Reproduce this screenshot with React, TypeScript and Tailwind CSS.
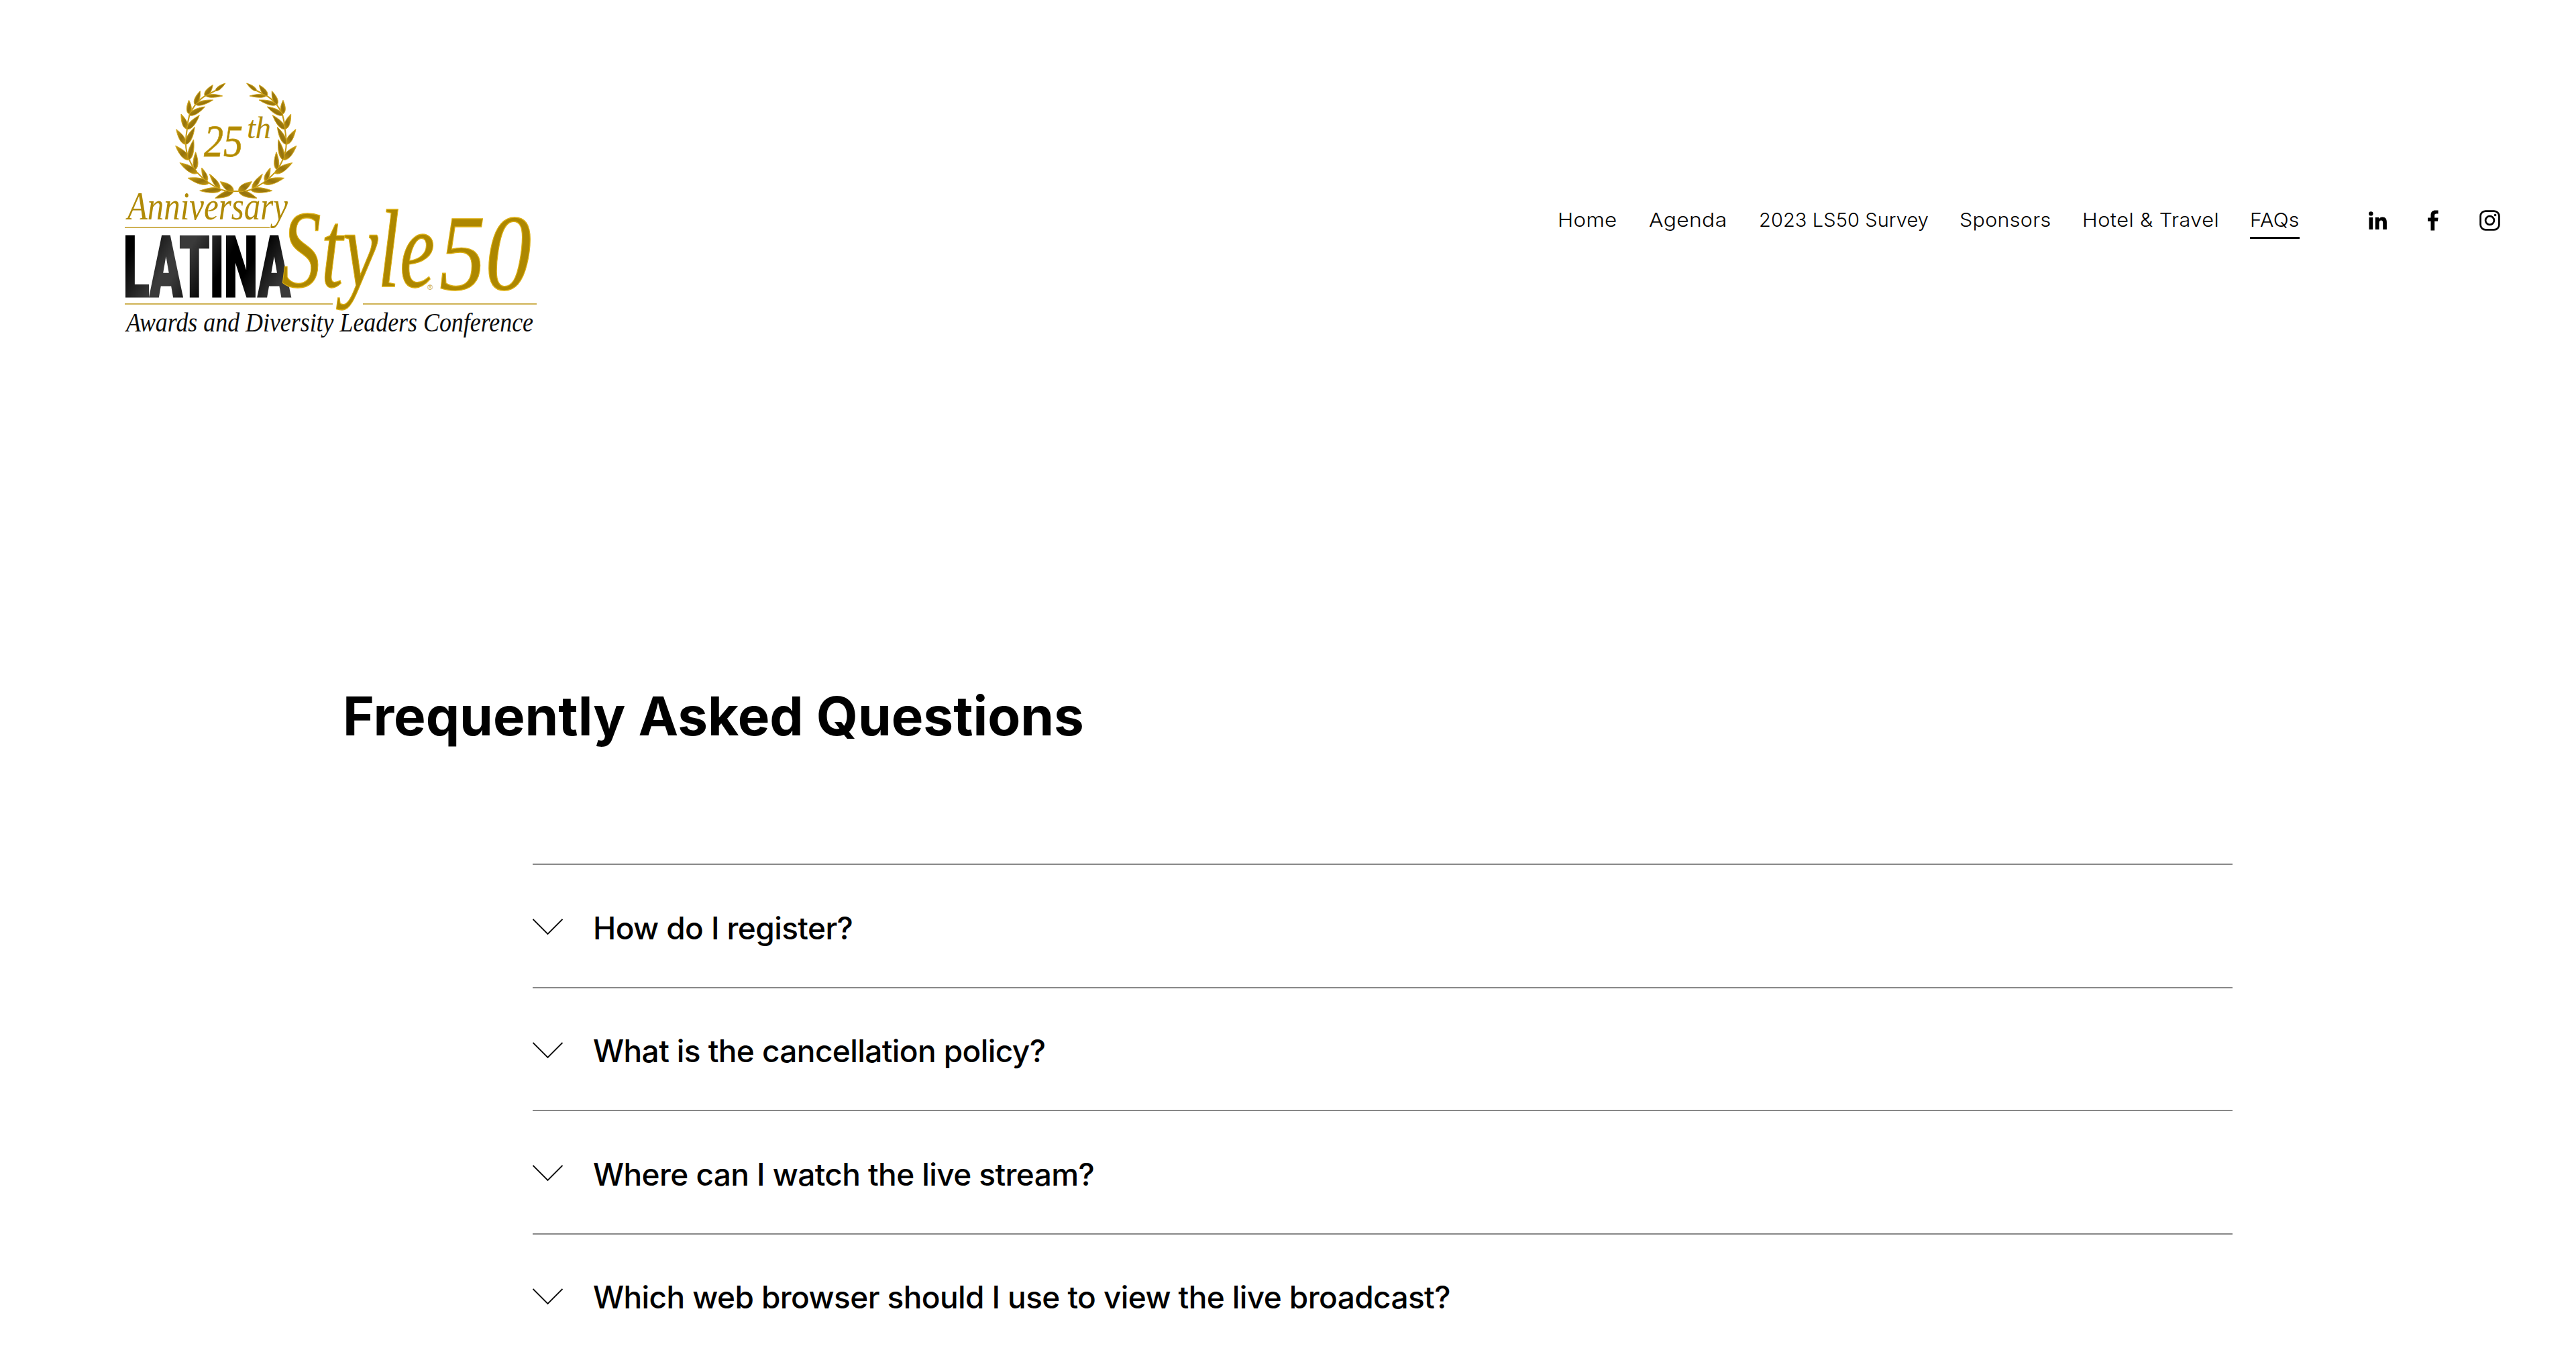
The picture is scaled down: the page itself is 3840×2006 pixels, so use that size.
import React, { useState } from 'react';

const navItems = [
  { label: 'Home', width: 'w-[90px]', text: 'scale-x-[1.08] tracking-[0.3px]' },
  { label: 'Agenda', width: 'w-[118px]', text: 'scale-x-[1.1] tracking-[0.3px]' },
  { label: '2023 LS50 Survey', width: 'w-[253px]', text: 'tracking-[0.1px]' },
  { label: 'Sponsors', width: 'w-[137px]', text: 'scale-x-[1.05] tracking-[0.3px]' },
  { label: 'Hotel & Travel', width: 'w-[204px]', text: 'scale-x-[1.06] tracking-[0.4px]' },
  { label: 'FAQs', width: 'w-[74px]', text: 'scale-x-[1.04] tracking-[0.1px]' },
];

const questions = [
  'How do I register?',
  'What is the cancellation policy?',
  'Where can I watch the live stream?',
  'Which web browser should I use to view the live broadcast?',
];

// base x, base y, tip x, tip y, half width for every leaf on the left branch
const leaves = [
  [243, 76, 288, 42, 9],
  [196, 99, 232, 50, 13],
  [200, 98, 275, 99, 9],
  [152, 138, 175, 77, 13],
  [155, 138, 233, 117, 11],
  [126, 180, 125, 118, 13],
  [126, 185, 197, 147, 13],
  [117, 248, 90, 180, 14],
  [117, 248, 172, 185, 14],
  [111, 316, 68, 248, 14],
  [111, 316, 151, 238, 14],
  [125, 385, 65, 322, 16],
  [125, 385, 146, 294, 14],
  [162, 445, 84, 398, 16],
  [154, 428, 155, 350, 13],
  [214, 490, 120, 466, 16],
  [206, 480, 182, 420, 12],
  [270, 519, 173, 523, 14],
  [263, 513, 217, 448, 12],
  [324, 525, 242, 556, 15],
  [324, 525, 265, 482, 17],
];

function leafPath([bx, by, tx, ty, w]: number[]) {
  const dx = tx - bx;
  const dy = ty - by;
  const len = Math.hypot(dx, dy);
  const nx = (-dy / len) * w;
  const ny = (dx / len) * w;
  const p = (t: number, s: number) => `${(bx + dx * t + nx * s).toFixed(1)} ${(by + dy * t + ny * s).toFixed(1)}`;
  return `M${bx} ${by}C${p(0.15, 1.2)} ${p(0.55, 1)} ${tx} ${ty}C${p(0.55, -1)} ${p(0.15, -1.2)} ${bx} ${by}Z`;
}

function Branch() {
  return (
    <>
      <path
        d="M336 525H322Q295 528 270 518Q240 506 212 486Q182 464 160 440Q137 412 125 380Q110 345 111 310Q111 276 117 246Q119 212 128 182Q138 158 155 136Q175 112 200 97L250 72"
        fill="none"
        stroke="#c69a10"
        strokeWidth="6"
      />
      {leaves.map((leaf, i) => (
        <path key={i} d={leafPath(leaf)} fill="url(#leaf)" stroke="#d3a71c" strokeWidth="3" strokeLinejoin="round" />
      ))}
    </>
  );
}

function Logo() {
  return (
    <svg width="616" height="400" viewBox="186 120 616 400" className="shrink-0 font-['Liberation_Serif',serif] italic">
      <defs>
        <linearGradient id="leaf" x1="0" y1="0" x2="1" y2="1">
          <stop offset="0" stopColor="#c99d12" />
          <stop offset="0.55" stopColor="#94720c" />
          <stop offset="1" stopColor="#c79a10" />
        </linearGradient>
        <linearGradient id="ink" gradientUnits="userSpaceOnUse" x1="190" y1="350" x2="260" y2="392" spreadMethod="reflect">
          <stop offset="0.2" stopColor="#000" />
          <stop offset="0.9" stopColor="#3a3a3a" />
        </linearGradient>
      </defs>

      <g transform="translate(240 110) scale(0.3333)">
        <Branch />
        <g transform="translate(671 0) scale(-1 1)">
          <Branch />
        </g>
      </g>

      <g fill="#b08a06" stroke="#c59a0c">
        <text x="304" y="233" fontSize="68" strokeWidth="0.8" textLength="58" lengthAdjust="spacingAndGlyphs">25</text>
        <text x="368" y="206" fontSize="47" strokeWidth="0" textLength="36" lengthAdjust="spacing">th</text>
        <text x="190" y="327" fontSize="59" strokeWidth="0" textLength="239" lengthAdjust="spacingAndGlyphs">Anniversary</text>
      </g>
      <path d="M186 339H402M186 453H496M541 453H800" stroke="#cfb254" strokeWidth="1.8" />

      <text
        x="184"
        y="442"
        fontSize="126"
        fill="url(#ink)"
        stroke="url(#ink)"
        strokeWidth="3"
        textLength="249"
        lengthAdjust="spacingAndGlyphs"
        className="font-['Roboto',sans-serif] font-black not-italic"
      >
        LATINA
      </text>

      <g fill="#ad8700" stroke="#dcae10" strokeWidth="1.4">
        <text x="420" y="427" fontSize="166" textLength="228" lengthAdjust="spacingAndGlyphs">Style</text>
        <text x="655" y="431" fontSize="162" textLength="137" lengthAdjust="spacingAndGlyphs">50</text>
      </g>
      <text x="637" y="432" fontSize="11" fill="#c39b2a" className="font-['Liberation_Sans',sans-serif] not-italic">®</text>

      <text x="188" y="494" fontSize="41" fill="#0c0c0c" textLength="607" lengthAdjust="spacingAndGlyphs">
        Awards and Diversity Leaders Conference
      </text>
    </svg>
  );
}

function SocialLinks() {
  return (
    <div className="mt-[7px] flex items-center">
      <a href="#linkedin" aria-label="LinkedIn">
        <svg width="27" height="28" viewBox="0 0 27 28" fill="currentColor">
          <circle cx="3.3" cy="3.4" r="3.2" />
          <path d="M.5 9h5.7v18H.5zM9.8 9h5.4v2.5c1-1.8 2.8-2.9 5.2-2.9 4.8 0 6.5 3 6.5 7.6V27h-5.7v-9.5c0-2.4-.6-4-2.6-4-2.2 0-3.100 1.600-3.100 4V27H9.800z" />
        </svg>
      </a>
      <a href="#facebook" aria-label="Facebook" className="ml-[61px]">
        <svg width="16" height="31" viewBox="0 0 16 31" fill="currentColor">
          <path d="M4.500 30.500V16.700H0v-5.300h4.500V7.500C4.500 2.900 7.200.4 11.300.4c1.900 0 3.500.1 4.300.2v4.900h-2.700c-2.200 0-2.700 1-2.700 2.600v3.300h5.400l-.7 5.300h-4.700v13.800z" />
        </svg>
      </a>
      <a href="#instagram" aria-label="Instagram" className="ml-[61px]">
        <svg width="31" height="31" viewBox="0 0 31 31" fill="none" stroke="currentColor" strokeWidth="2.7">
          <rect x="1.6" y="1.6" width="27.8" height="27.8" rx="7.5" />
          <circle cx="15.5" cy="15.5" r="6.4" />
          <circle cx="23.6" cy="7.5" r="1.8" fill="currentColor" stroke="none" />
        </svg>
      </a>
    </div>
  );
}

export default function App() {
  const [open, setOpen] = useState<number | null>(null);

  return (
    <div className="h-[2006px] w-[3840px] overflow-hidden bg-white font-['Inter',sans-serif] text-black">
      <header className="flex h-[1019px] items-start justify-between pl-[186px] pr-[113px]">
        <div className="pt-[120px]">
          <Logo />
        </div>
        <div className="flex items-start gap-[103px] pt-[306px]">
          <nav className="flex gap-[46px] text-[29px] font-[330] leading-[44px]">
            {navItems.map((item) => (
              <a
                key={item.label}
                href="#"
                className={`${item.width} whitespace-nowrap pb-[3px] ${item.label === 'FAQs' ? 'border-b-[3px] border-black' : ''}`}
              >
                <span className={`inline-block origin-left ${item.text}`}>{item.label}</span>
              </a>
            ))}
          </nav>
          <SocialLinks />
        </div>
      </header>

      <main>
        <h1 className="ml-[511px] text-[80px] font-bold leading-[96px]">Frequently Asked Questions</h1>
        <ul className="ml-[794px] mt-[172px] w-[2534px]">
          {questions.map((question, i) => (
            <li key={question} className="h-[183.5px] border-t-2 border-[#888]">
              <button
                onClick={() => setOpen(open === i ? null : i)}
                aria-expanded={open === i}
                className="flex h-full w-full items-center gap-[45px] text-left"
              >
                <svg width="45" height="25" viewBox="0 0 45 25" fill="none" stroke="currentColor" strokeWidth="1.8" className="mt-[4px] shrink-0">
                  <path d="M.5 1L22.5 23L44.5 1" />
                </svg>
                <span className="pt-[7px] text-[46px] font-medium tracking-[-0.6px]">{question}</span>
              </button>
            </li>
          ))}
        </ul>
      </main>
    </div>
  );
}
